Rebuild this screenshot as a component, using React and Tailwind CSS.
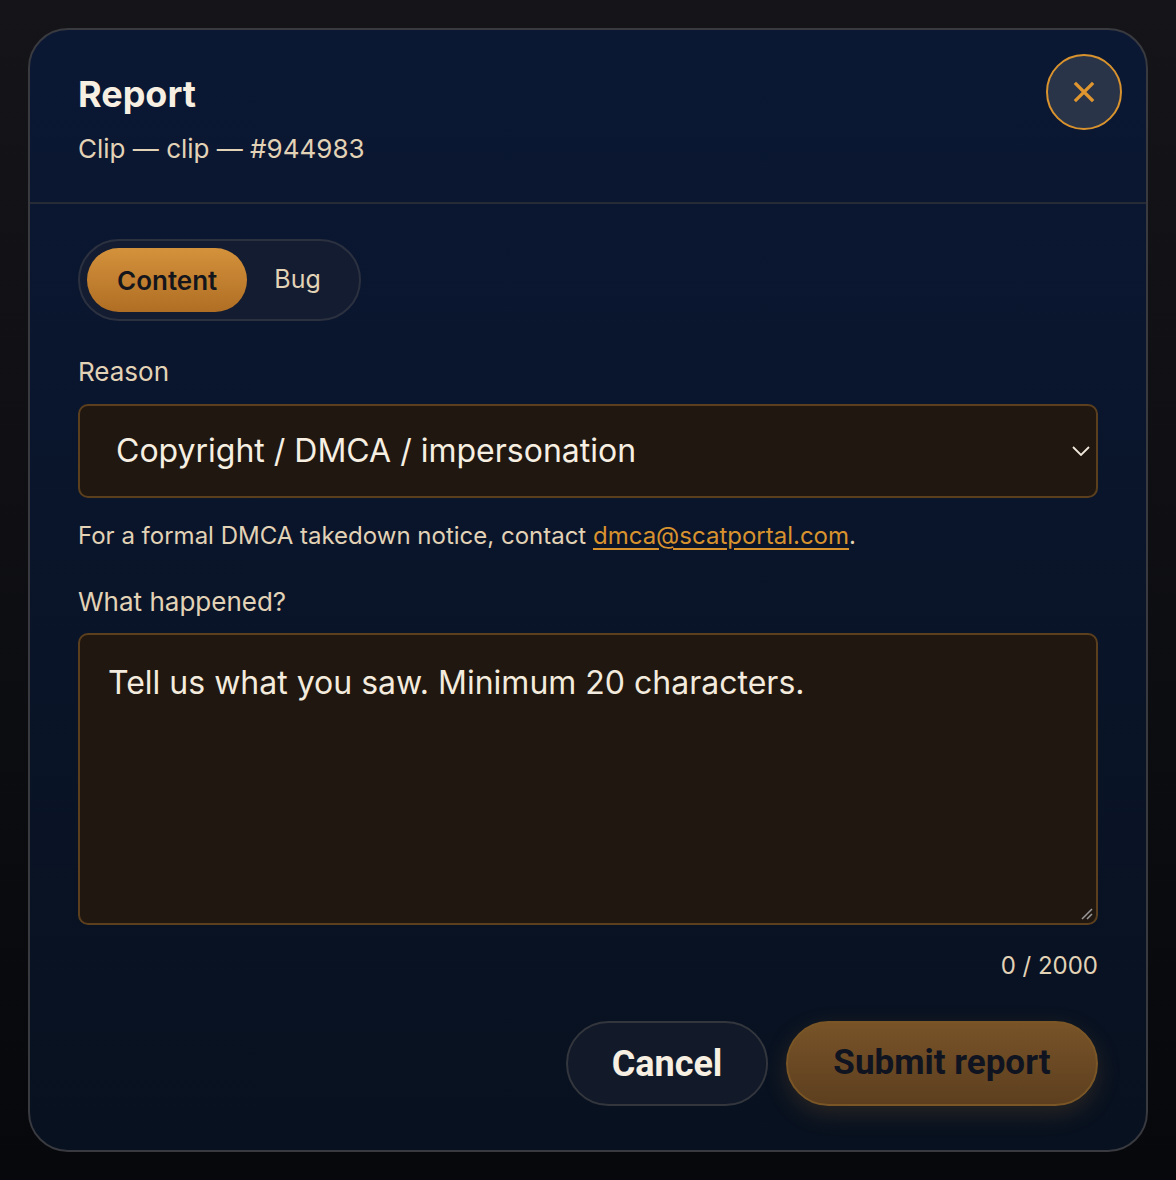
export default function App() {
  return (
    <div className="w-[1176px] h-[1180px] bg-gradient-to-b from-[#151519] to-[#07080c] pt-[28px] pl-[28px]" style={{ fontFamily: 'Inter, "Noto Sans", sans-serif' }}>
      <div className="relative w-[1120px] h-[1124px] rounded-[40px] border-2 border-[#393a40] bg-gradient-to-b from-[#0b1834] to-[#08111f] overflow-hidden">
        <div className="px-[48px] pt-[43px] pb-[37px] border-b-2 border-[#272b36]">
          <div className="text-[36px] leading-[42px] font-bold text-[#f6efe2]">Report</div>
          <div className="mt-[18px] text-[26px] leading-[32px] text-[#e2d2b6]">Clip — clip — #944983</div>
        </div>
        <button className="absolute top-[24px] right-[24px] w-[76px] h-[76px] rounded-full border-2 border-[#d8922e] bg-[#293449] flex items-center justify-center">
          <svg width="22" height="22" viewBox="0 0 22 22" fill="none" stroke="#e0962f" strokeWidth="3.2" strokeLinecap="square">
            <path d="M3 3L19 19M19 3L3 19" />
          </svg>
        </button>
        <div className="px-[48px] pt-[35px]">
          <div className="inline-flex items-center p-[7px] rounded-full border-2 border-[#2c3140] bg-[#131c31]">
            <div className="h-[64px] px-[30px] rounded-full bg-gradient-to-b from-[#d4923c] to-[#b06e24] flex items-center text-[26px] font-semibold text-[#14161c]">Content</div>
            <div className="h-[64px] pl-[27px] pr-[31px] rounded-full flex items-center text-[25px] text-[#e2d2b6]">Bug</div>
          </div>
          <div className="mt-[35px] text-[26px] leading-[32px] text-[#e2d2b6]">Reason</div>
          <div className="mt-[16px] h-[94px] rounded-[10px] border-2 border-[#5c401e] bg-[#201710] flex items-center justify-between pl-[36px] pr-[6px]">
            <span className="text-[32px] text-[#f6efe2]">Copyright / DMCA / impersonation</span>
            <svg width="18" height="10" viewBox="0 0 18 10" fill="none" stroke="#f0e8da" strokeWidth="1.8">
              <path d="M1 1L9 9L17 1" />
            </svg>
          </div>
          <div className="mt-[22px] text-[24px] leading-[32px] text-[#e2d2b6]">
            For a formal DMCA takedown notice, contact <span className="text-[#d8922e] underline underline-offset-[4px]">dmca@scatportal.com</span>.
          </div>
          <div className="mt-[34px] text-[26px] leading-[32px] text-[#e2d2b6]">What happened?</div>
          <div className="relative mt-[15px] h-[292px] rounded-[10px] border-2 border-[#5c401e] bg-[#201710] px-[28px] pt-[28px]">
            <div className="text-[32px] leading-[40px] text-[#f3ebdd]">Tell us what you saw. Minimum 20 characters.</div>
            <svg className="absolute right-[3px] bottom-[3px]" width="12" height="12" viewBox="0 0 12 12" stroke="#9a9a9a" strokeWidth="1.5">
              <path d="M1 11L11 1M6 11L11 6" />
            </svg>
          </div>
          <div className="mt-[25px] text-right text-[24px] leading-[32px] text-[#e2d2b6]">0 / 2000</div>
          <div className="mt-[39px] flex justify-end gap-[18px]" style={{ fontFamily: 'Roboto, Inter, sans-serif' }}>
            <button className="h-[85px] w-[202px] rounded-full border-2 border-[#33363d] bg-[#121a29] text-[36px] font-bold text-[#f6efe2]">Cancel</button>
            <button className="h-[85px] w-[312px] rounded-full border-2 border-[#7a5626] bg-gradient-to-b from-[#785328] to-[#5d3f1f] text-[35px] font-bold text-[#0f1420] shadow-[0_8px_24px_rgba(190,130,50,0.18)]">Submit report</button>
          </div>
        </div>
      </div>
    </div>
  );
}
